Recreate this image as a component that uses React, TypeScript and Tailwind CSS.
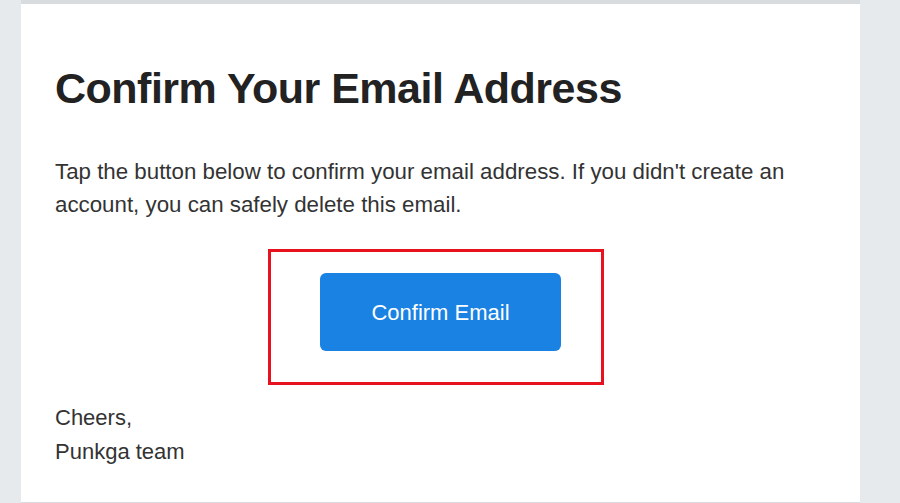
export default function App() {
  return (
    <div className="w-[900px] h-[503px] overflow-hidden bg-[#e6eaed] pl-[21px] font-['Liberation_Sans',Arial,sans-serif]">
      <div className="w-[839px] h-[503px] bg-white border-t-[4px] border-b border-[#d8dcdf] px-[34px] pt-[58px]">
        {/* Heading */}
        <h1 className="text-[43px] leading-[52px] font-bold text-[#222222] tracking-[-0.5px]">
          Confirm Your Email Address
        </h1>

        {/* Intro */}
        <p className="mt-[41px] text-[22.3px] leading-[33px] text-[#333333] pr-[20px]">
          Tap the button below to confirm your email address. If you didn't create an account, you can safely delete this email.
        </p>

        {/* Button area */}
        <div className="flex justify-center mt-[28px] pr-[9px]">
          <div className="w-[336px] h-[136px] border-[3px] border-[#e8121f] pt-[21px] pl-[49px]">
            <a
              href="#"
              className="w-[241px] h-[78px] rounded-[6px] bg-[#1a82e2] text-white text-[22px] flex items-center justify-center"
            >
              Confirm Email
            </a>
          </div>
        </div>

        {/* Sign-off */}
        <p className="mt-[16px] text-[22px] leading-[34px] text-[#333333]">
          Cheers,
          <br />
          Punkga team
        </p>
      </div>
    </div>
  );
}
